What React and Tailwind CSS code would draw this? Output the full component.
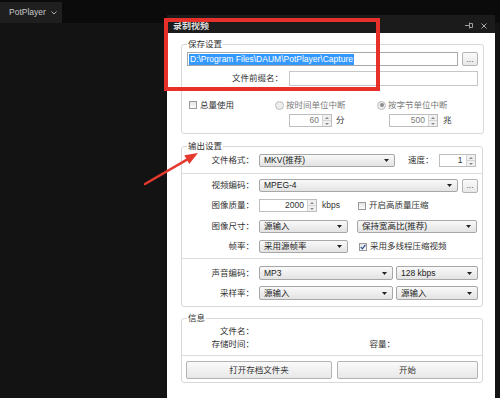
import React from "react";
import clsx from "clsx";

function Caret() {
  return (
    <svg width="5" height="3" viewBox="0 0 5 3" className="shrink-0">
      <polygon points="0,0 5,0 2.5,3" fill="#222" />
    </svg>
  );
}

function Select({ className, children }) {
  return (
    <div
      className={clsx(
        "flex items-center justify-between h-full border border-[#a7a7a7] rounded-[2px] bg-linear-to-b from-[#f9f9f9] to-[#e3e3e3] pl-[4px] pr-[5px] text-[#222]",
        className
      )}
    >
      <span className="leading-none whitespace-nowrap">{children}</span>
      <Caret />
    </div>
  );
}

function Spin({ className, value, dim }) {
  return (
    <div className={clsx("flex h-full border border-[#bdbdbd] bg-white", className)}>
      <div
        className={clsx(
          "flex-1 flex items-center justify-end pr-[3px] leading-none",
          dim ? "text-[#7a7a7a]" : "text-[#333]"
        )}
      >
        {value}
      </div>
      <div className="w-[9px] flex flex-col border-l border-[#d4d4d4] bg-[#f0f0f0]">
        <div className="flex-1 flex items-center justify-center border-b border-[#d4d4d4]">
          <svg width="4" height="2" viewBox="0 0 4 2">
            <polygon points="0,2 4,2 2,0" fill="#8a8a8a" />
          </svg>
        </div>
        <div className="flex-1 flex items-center justify-center">
          <svg width="4" height="2" viewBox="0 0 4 2">
            <polygon points="0,0 4,0 2,2" fill="#8a8a8a" />
          </svg>
        </div>
      </div>
    </div>
  );
}

function Btn({ className, children }) {
  return (
    <div
      className={clsx(
        "flex items-center justify-center border border-[#b3b3b3] rounded-[2px] bg-linear-to-b from-[#fafafa] to-[#e8e8e8] text-[#333] leading-none",
        className
      )}
    >
      {children}
    </div>
  );
}

function Check({ checked }) {
  return (
    <div className="w-[8px] h-[8px] shrink-0 border border-[#9a9a9a] bg-linear-to-b from-[#e4e4e4] to-[#fbfbfb] flex items-center justify-center">
      {checked && (
        <svg width="6" height="6" viewBox="0 0 6 6">
          <path d="M0.8 3 L2.4 4.8 L5.4 0.8" stroke="#2d4f8f" strokeWidth="1.2" fill="none" />
        </svg>
      )}
    </div>
  );
}

function Radio({ on }) {
  return (
    <div className="w-[9px] h-[9px] shrink-0 rounded-full border border-[#bcbcbc] bg-[#ededed] flex items-center justify-center">
      {on && <div className="w-[4px] h-[4px] rounded-full bg-[#8c8c8c]" />}
    </div>
  );
}

function Label({ children }) {
  return <div className="w-[72px] shrink-0 text-right leading-none text-[#333]">{children}</div>;
}

function Sep() {
  return <div className="h-px bg-[#dcdcdc]" />;
}

function Legend({ children }) {
  return <legend className="ml-[5px] px-[1px] leading-[8px] text-[#333]">{children}</legend>;
}

export default function App() {
  return (
    <div className="relative w-[500px] h-[398px] overflow-hidden bg-[#131313] flex flex-col font-['Liberation_Sans','Noto_Sans_CJK_SC',sans-serif] text-[8.5px]">
      {/* top bar */}
      <div className="h-[23px] bg-[#0b0b0b] pt-[2px] flex">
        <div className="w-[62px] h-[21px] bg-[#1f1f1f] flex items-center pl-[9px] text-[#c8c8c8]">
          <span className="leading-none">PotPlayer</span>
          <svg width="6" height="4" viewBox="0 0 6 4" className="ml-[5px]">
            <path d="M0.5 0.5 L3 3 L5.5 0.5" stroke="#bdbdbd" strokeWidth="0.9" fill="none" />
          </svg>
        </div>
      </div>
      <div className="flex-1 bg-[#131313]" />

      {/* dialog window */}
      <div className="absolute left-[167px] top-[15px] w-[328px] h-[383px] flex flex-col">
        <div className="h-[18px] bg-[#1b1b1b] flex items-center justify-between pl-[6px] pr-[8px]">
          <span className="mt-[5px] text-[9px] font-bold text-[#dedede] leading-none">录制视频</span>
          <div className="flex items-center gap-[8px] mt-[3px]">
            <svg width="8" height="7" viewBox="0 0 8 7">
              <path d="M0 3.5 H4.5 M4.5 0.5 V6.5 M4.5 1.5 H7.5 V5.5 H4.5" stroke="#9c9c9c" strokeWidth="1" fill="none" />
            </svg>
            <svg width="6" height="6" viewBox="0 0 6 6">
              <path d="M0.5 0.5 L5.5 5.5 M5.5 0.5 L0.5 5.5" stroke="#a8a8a8" strokeWidth="1" />
            </svg>
          </div>
        </div>

        <div className="flex-1 bg-white pl-[14px] pr-[12px] pt-[7px] flex flex-col">
          {/* 保存设置 */}
          <fieldset className="border border-[#d8d8d8] rounded-[3px] px-0">
            <Legend>保存设置</Legend>
            <div className="px-[5px] flex flex-col pb-[6px]">
              <div className="flex mt-[4px] h-[14px] gap-[4px]">
                <div className="w-[271px] h-full border border-[#a9a9a9] bg-white flex items-center pl-[1px]">
                  <span className="bg-[#3399ff] text-white leading-[11px] px-[1px] whitespace-nowrap">
                    {"D:\\Program Files\\DAUM\\PotPlayer\\Capture"}
                  </span>
                </div>
                <Btn className="w-[16px] h-[14px] text-[#555]">...</Btn>
              </div>
              <div className="flex mt-[5px] h-[15px] items-center">
                <div className="w-[96px] text-right leading-none text-[#333]">文件前缀名：</div>
                <div className="ml-[6px] w-[189px] h-full border border-[#c6c6c6] bg-white" />
              </div>
              <div className="flex mt-[13px] h-[12px] items-center">
                <div className="w-[88px] flex items-center pl-[2px] gap-[3px]">
                  <Check />
                  <span className="leading-none text-[#333]">总量使用</span>
                </div>
                <div className="w-[102px] flex items-center gap-[2px]">
                  <Radio />
                  <span className="leading-none text-[#7a7a7a]">按时间单位中断</span>
                </div>
                <div className="flex items-center gap-[2px]">
                  <Radio on />
                  <span className="leading-none text-[#7a7a7a]">按字节单位中断</span>
                </div>
              </div>
              <div className="flex mt-[3px] h-[13px] items-center pl-[102px]">
                <div className="w-[100px] h-full flex items-center">
                  <Spin className="w-[43px]" value="60" dim />
                  <span className="ml-[4px] leading-none text-[#333]">分</span>
                </div>
                <div className="h-full flex items-center">
                  <Spin className="w-[49px]" value="500" dim />
                  <span className="ml-[5px] leading-none text-[#333]">兆</span>
                </div>
              </div>
            </div>
          </fieldset>

          {/* 输出设置 */}
          <fieldset className="mt-[8px] border border-[#d8d8d8] rounded-[3px] px-0 pb-[6px]">
            <Legend>输出设置</Legend>
            <div className="flex items-center mt-[4px] h-[13px]">
              <Label>文件格式：</Label>
              <Select className="ml-[5px] w-[136px]">MKV(推荐)</Select>
              <span className="ml-[13px] leading-none text-[#333]">速度：</span>
              <Spin className="ml-[5px] w-[37px]" value="1" />
            </div>
            <div className="mt-[6px]">
              <Sep />
            </div>
            <div className="flex items-center mt-[5px] h-[13px]">
              <Label>视频编码：</Label>
              <Select className="ml-[5px] w-[199px]">MPEG-4</Select>
              <Btn className="ml-[4px] w-[16px] h-[14px] text-[#555]">...</Btn>
            </div>
            <div className="flex items-center mt-[7px] h-[13px]">
              <Label>图像质量：</Label>
              <div className="ml-[5px] w-[99px] h-full flex items-center">
                <Spin className="w-[58px]" value="2000" />
                <span className="ml-[5px] leading-none text-[#333]">kbps</span>
              </div>
              <Check />
              <span className="ml-[3px] leading-none text-[#333]">开启高质量压缩</span>
            </div>
            <div className="flex items-center mt-[8px] h-[13px]">
              <Label>图像尺寸：</Label>
              <Select className="ml-[5px] w-[89px]">源输入</Select>
              <Select className="ml-[9px] w-[120px]">保持宽高比(推荐)</Select>
            </div>
            <div className="flex items-center mt-[7px] h-[13px]">
              <Label>帧率：</Label>
              <Select className="ml-[5px] w-[89px]">采用源帧率</Select>
              <div className="ml-[11px]">
                <Check checked />
              </div>
              <span className="ml-[3px] leading-none text-[#333]">采用多线程压缩视频</span>
            </div>
            <div className="mt-[5px]">
              <Sep />
            </div>
            <div className="flex items-center mt-[7px] h-[14px]">
              <Label>声音编码：</Label>
              <Select className="ml-[5px] w-[134px]">MP3</Select>
              <Select className="ml-[3px] w-[82px]">128 kbps</Select>
            </div>
            <div className="flex items-center mt-[6px] h-[14px]">
              <Label>采样率：</Label>
              <Select className="ml-[5px] w-[134px]">源输入</Select>
              <Select className="ml-[3px] w-[82px]">源输入</Select>
            </div>
          </fieldset>

          {/* 信息 */}
          <fieldset className="mt-[7px] border border-[#d8d8d8] rounded-[3px] px-0 pb-[3px]">
            <Legend>信息</Legend>
            <div className="flex items-center mt-[5px] h-[9px]">
              <Label>文件名：</Label>
            </div>
            <div className="flex items-center mt-[4px] h-[9px]">
              <Label>存储时间：</Label>
              <div className="w-[141px] text-right leading-none text-[#333]">容量：</div>
            </div>
            <div className="mt-[6px]">
              <Sep />
            </div>
            <div className="flex mt-[5px] pl-[4px] gap-[5px]">
              <Btn className="w-[146px] h-[18px]">打开存档文件夹</Btn>
              <Btn className="w-[141px] h-[18px]">开始</Btn>
            </div>
          </fieldset>
        </div>
      </div>

      {/* red highlight box */}
      <div className="absolute left-[164px] top-[18px] w-[216px] h-[73px] border-[4px] border-[#e8302a]" />

      {/* red arrow */}
      <svg className="absolute left-0 top-0" width="500" height="398" viewBox="0 0 500 398" pointerEvents="none">
        <line x1="145" y1="184" x2="187" y2="159.6" stroke="#e5392e" strokeWidth="2.5" strokeLinecap="round" />
        <polygon points="198,153 184.3,155.3 189.3,163.9" fill="#e5392e" />
      </svg>
    </div>
  );
}
